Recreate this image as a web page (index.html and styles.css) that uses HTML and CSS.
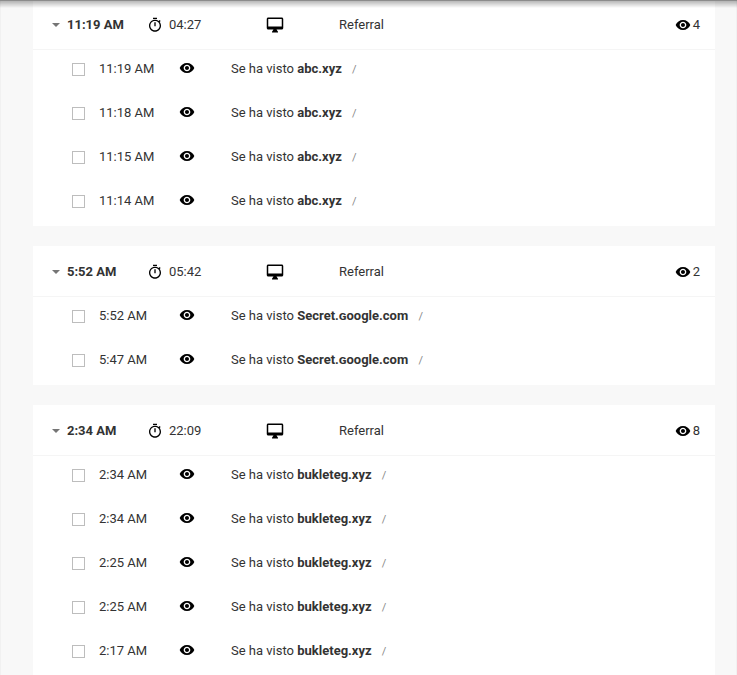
FILE: index.html
```
<!DOCTYPE html>
<html lang="es">
<head>
<meta charset="utf-8">
<meta name="viewport" content="width=device-width, initial-scale=1">
<title>Actividad del usuario</title>
<link rel="stylesheet" href="styles.css">
</head>
<body>
<svg class="sprite" aria-hidden="true">
  <symbol id="eye" viewBox="0 0 24 24"><path d="M12 4.500C7 4.500 2.730 7.610 1 12c1.730 4.390 6 7.500 11 7.500s9.270-3.110 11-7.500c-1.730-4.390-6-7.500-11-7.500zM12 17c-2.760 0-5-2.240-5-5s2.240-5 5-5 5 2.240 5 5-2.240 5-5 5zm0-8c-1.660 0-3 1.340-3 3s1.340 3 3 3 3-1.340 3-3-1.340-3-3-3z"/></symbol>
  <symbol id="timer" viewBox="0 0 24 24"><path d="M15 1H9v2h6V1zm-4 13h2V8h-2v6zm8.030-6.610l1.420-1.420c-.43-.51-.9-.99-1.410-1.410l-1.420 1.420C16.070 4.740 14.120 4 12 4c-4.970 0-9 4.030-9 9s4.020 9 9 9 9-4.030 9-9c0-2.120-.74-4.070-1.970-5.610zM12 20c-3.870 0-7-3.130-7-7s3.130-7 7-7 7 3.130 7 7-3.130 7-7 7z"/></symbol>
  <symbol id="desktop" viewBox="0 0 24 24"><path d="M21 2H3c-1.100 0-2 .9-2 2v12c0 1.100.9 2 2 2h7l-2 3v1h8v-1l-2-3h7c1.100 0 2-.9 2-2V4c0-1.100-.9-2-2-2zm0 12H3V4h18v10z"/></symbol>
</svg>
<main class="feed" id="feed"></main>
<script src="feed.js"></script>
</body>
</html>
```
FILE: styles.css
```
* {
  box-sizing: border-box;
}

body {
  margin: 0;
  height: 100vh;
  overflow: hidden;
  background: #f8f8f8;
  border: solid #f1f1f1;
  border-width: 0 1px;
  color: #333;
  font: 13px/20px Roboto, "Liberation Sans", sans-serif;
}

/* Shadow cast by the toolbar above the feed */
body::before {
  content: "";
  position: fixed;
  inset: 0 0 auto;
  height: 8px;
  background: linear-gradient(#8c8c8c 1px, rgba(0, 0, 0, 0.28) 1px, rgba(0, 0, 0, 0));
}

.sprite {
  display: none;
}

.feed {
  display: flex;
  flex-direction: column;
  gap: 20px;
  margin: -1px 21px 0 32px;
}

.session {
  background: #fff;
}

.summary {
  display: grid;
  grid-template-columns: 95px 119px 73px 1fr auto;
  align-items: center;
  height: 51px;
  padding: 2px 15px 0 19px;
  border-bottom: 1px solid #f5f5f5;
}

.toggle {
  display: flex;
  align-items: center;
  gap: 7px;
  padding: 0;
  border: 0;
  background: none;
  color: inherit;
  font: inherit;
  font-weight: 700;
}

.caret {
  border: 4px solid transparent;
  border-top-color: #757575;
  border-bottom: 0;
}

.duration {
  display: flex;
  align-items: center;
  gap: 6px;
}

.views {
  display: flex;
  align-items: center;
  gap: 2px;
}

.icon {
  display: block;
  width: 16px;
  height: 16px;
  fill: #000;
}

.icon.large {
  width: 18px;
  height: 18px;
}

.events {
  margin: 0;
  padding: 0;
  list-style: none;
}

.event {
  display: grid;
  grid-template-columns: 27px 80px 52px 1fr;
  align-items: start;
  height: 44px;
  padding: 9px 20px 15px 39px;
}

.event .icon {
  margin-top: 1px;
}

.check {
  appearance: none;
  width: 13px;
  height: 13px;
  margin: 4px 0 0;
  border: 1px solid #bdbdbd;
  background: #fff;
}

.path {
  margin-left: 7px;
  color: #888;
  font-size: 11px;
}
```
FILE: feed.js
```
const sessions = [
  { time: "11:19 AM", duration: "04:27", views: 4, site: "abc.xyz",
    events: ["11:19 AM", "11:18 AM", "11:15 AM", "11:14 AM"] },
  { time: "5:52 AM", duration: "05:42", views: 2, site: "Secret.ɢoogle.com",
    events: ["5:52 AM", "5:47 AM"] },
  { time: "2:34 AM", duration: "22:09", views: 8, site: "bukleteg.xyz",
    events: ["2:34 AM", "2:34 AM", "2:25 AM", "2:25 AM", "2:17 AM"] }
];

const icon = (name, size = "") =>
  `<svg class="icon ${size}" aria-hidden="true"><use href="#${name}"/></svg>`;

const eventRow = (time, site, id) => `
  <li class="event">
    <input class="check" type="checkbox" id="${id}">
    <label for="${id}">${time}</label>
    ${icon("eye")}
    <span>Se ha visto <b>${site}</b> <span class="path">/</span></span>
  </li>`;

const sessionCard = (s, i) => `
  <section class="session">
    <header class="summary">
      <button class="toggle" type="button" aria-expanded="true"><span class="caret"></span>${s.time}</button>
      <span class="duration">${icon("timer")}${s.duration}</span>
      ${icon("desktop", "large")}
      <span>Referral</span>
      <span class="views">${icon("eye")}${s.views}</span>
    </header>
    <ul class="events">
      ${s.events.map((time, j) => eventRow(time, s.site, `event-${i}-${j}`)).join("")}
    </ul>
  </section>`;

document.getElementById("feed").innerHTML = sessions.map(sessionCard).join("");
```
